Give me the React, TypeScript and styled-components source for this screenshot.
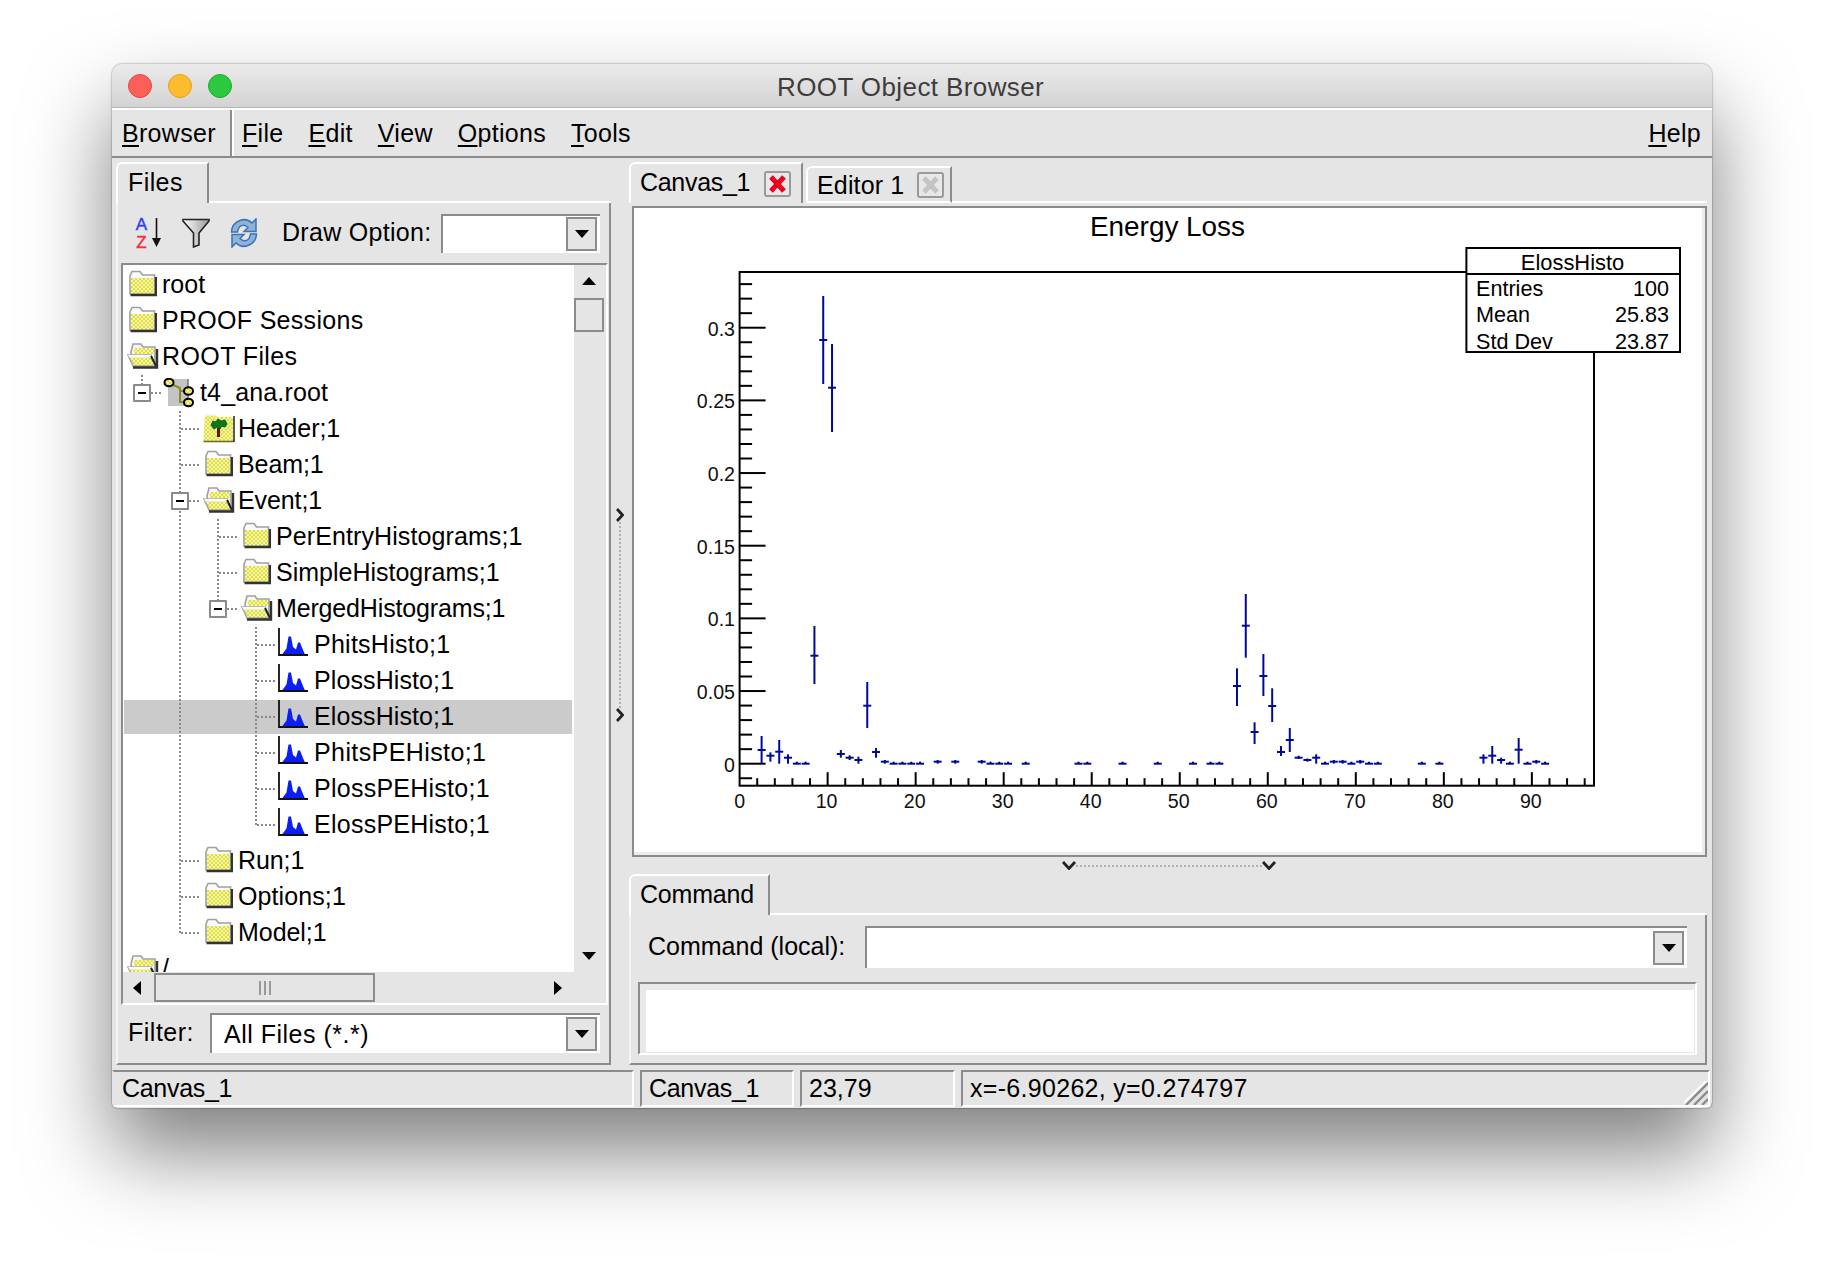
import styled, { createGlobalStyle, css } from "styled-components";

const GlobalStyle = createGlobalStyle`
  html, body {
    margin: 0;
    background: #fff;
    color: #000;
    font-family: "Liberation Sans", Arial, sans-serif;
    font-size: 25px;
  }
`;

const Page = styled.div`
  width: 1824px;
  height: 1268px;
  padding: 64px 112px 0;
  box-sizing: border-box;
  overflow: hidden;
`;

const Window = styled.div`
  width: 1600px;
  height: 1044px;
  display: flex;
  flex-direction: column;
  background: #e5e5e5;
  border-radius: 10px 10px 6px 6px;
  box-shadow: 0 44px 84px rgba(0, 0, 0, 0.5), 0 0 2px rgba(0, 0, 0, 0.55);
  overflow: hidden;
`;

const TitleBar = styled.div`
  height: 44px;
  flex: none;
  display: flex;
  align-items: center;
  gap: 16px;
  padding-left: 16px;
  box-sizing: border-box;
  background: linear-gradient(#ebebeb, #d3d3d3);
  border-bottom: 1px solid #b4b4b4;
`;

const Light = styled.span<{ $color: string; $edge: string }>`
  width: 24px;
  height: 24px;
  box-sizing: border-box;
  border-radius: 50%;
  background: ${(p) => p.$color};
  border: 1px solid ${(p) => p.$edge};
`;

const Title = styled.div`
  margin-left: 529px;
  padding-top: 3px;
  font-size: 26px;
  letter-spacing: 0.4px;
  color: #3d3d3d;
`;

const MenuBar = styled.div`
  height: 50px;
  flex: none;
  display: flex;
  align-items: center;
  box-sizing: border-box;
  border-top: 2px solid #fff;
  border-bottom: 2px solid #8c8c8c;
  padding-right: 11px;
`;

const BrowserMenu = styled.div`
  width: 120px;
  height: 100%;
  flex: none;
  display: flex;
  align-items: center;
  box-sizing: border-box;
  padding-left: 10px;
  border-right: 2px solid #8c8c8c;
  box-shadow: 2px 0 0 #fff;
`;

const MenuList = styled.div`
  display: flex;
  gap: 25px;
  padding-left: 10px;
`;

const MenuItem = styled.span`
  letter-spacing: 0.3px;

  u {
    text-decoration-thickness: 2px;
    text-underline-offset: 3px;
  }
`;

const HelpItem = styled(MenuItem)`
  margin-left: auto;
`;

const Body = styled.div`
  height: 910px;
  flex: none;
  display: flex;
  padding: 4px 5px 0 4px;
  box-sizing: border-box;
`;

const LeftColumn = styled.div`
  width: 495px;
  height: 903px;
  flex: none;
  display: flex;
  flex-direction: column;
`;

const RightColumn = styled.div`
  width: 1078px;
  height: 903px;
  flex: none;
  display: flex;
  flex-direction: column;
`;

const VSplitter = styled.div`
  width: 18px;
  flex: none;
  height: 903px;
  padding-top: 2px;
  box-sizing: border-box;
  display: flex;
  flex-direction: column;
  align-items: center;
  justify-content: center;
`;

const VDots = styled.div`
  height: 186px;
  border-left: 2px dotted #b0b0b0;
`;

const HSplitter = styled.div`
  height: 17px;
  flex: none;
  padding-left: 2px;
  display: flex;
  align-items: center;
  justify-content: center;
`;

const HDots = styled.div`
  width: 186px;
  border-top: 2px dotted #b0b0b0;
`;

const TabStrip = styled.div`
  height: 41px;
  flex: none;
  display: flex;
  align-items: flex-end;
`;

const Tab = styled.div<{ $active?: boolean; $width: number }>`
  width: ${(p) => p.$width}px;
  height: ${(p) => (p.$active ? 41 : 37)}px;
  flex: none;
  display: flex;
  align-items: center;
  box-sizing: border-box;
  padding-left: 9px;
  border-top: 2px solid #fff;
  border-left: 2px solid #fff;
  border-right: 2px solid #8c8c8c;
  border-top-left-radius: 6px;
  ${(p) => !p.$active && "border-bottom: 2px solid #fff; margin-left: 3px;"}
`;

const TabLabel = styled.span<{ $track: number; $active?: boolean; $indent?: number }>`
  letter-spacing: ${(p) => p.$track}px;
  padding: ${(p) => (p.$active ? "0 0 2px" : "2px 0 0")};
  margin-left: ${(p) => p.$indent ?? 0}px;
`;

const TabFill = styled.div`
  flex: 1;
  border-bottom: 2px solid #fff;
`;

const CloseButton = styled.span<{ $gap: number }>`
  width: 27px;
  height: 26px;
  margin-left: ${(p) => p.$gap}px;
  flex: none;
  display: flex;
  align-items: center;
  justify-content: center;
  box-sizing: border-box;
  border: 2px solid #9a9a9a;
  border-radius: 3px;
  background: #e8e8e8;
`;

const FilesPanel = styled.div`
  flex: 1;
  min-height: 0;
  display: flex;
  flex-direction: column;
  border-left: 2px solid #f4f4f4;
  border-right: 2px solid #8c8c8c;
  border-bottom: 2px solid #8c8c8c;
`;

const Toolbar = styled.div`
  height: 60px;
  flex: none;
  display: flex;
  align-items: center;
  box-sizing: border-box;
  padding: 0 9px 0 17px;
`;

const ToolIcon = styled.svg<{ $gap: number }>`
  flex: none;
  margin-right: ${(p) => p.$gap}px;
`;

const FieldLabel = styled.span<{ $left?: number; $track?: number }>`
  margin-left: ${(p) => p.$left ?? 0}px;
  padding-bottom: 2px;
  letter-spacing: ${(p) => p.$track ?? 0}px;
  white-space: nowrap;
`;

const Combo = styled.div<{ $width: number; $height: number }>`
  width: ${(p) => p.$width}px;
  height: ${(p) => p.$height}px;
  margin-left: auto;
  flex: none;
  display: flex;
  align-items: center;
  justify-content: space-between;
  box-sizing: border-box;
  padding: 0 3px 0 12px;
  background: #fff;
  border-top: 2px solid #8c8c8c;
  border-left: 2px solid #8c8c8c;
`;

const ComboText = styled.span`
  letter-spacing: 0.5px;
`;

const ComboButton = styled.span`
  width: 31px;
  height: 34px;
  flex: none;
  display: flex;
  align-items: center;
  justify-content: center;
  box-sizing: border-box;
  background: #e5e5e5;
  border: 2px solid #8c8c8c;
`;

const TreeFrame = styled.div`
  width: 487px;
  height: 742px;
  flex: none;
  margin-left: 3px;
  display: grid;
  grid-template-columns: 451px 32px;
  grid-template-rows: 707px 31px;
  box-sizing: border-box;
  border-top: 2px solid #8c8c8c;
  border-left: 2px solid #8c8c8c;
  border-right: 2px solid #fff;
  border-bottom: 2px solid #fff;
`;

const TreeList = styled.div`
  background: #fff;
  padding-top: 2px;
  overflow: hidden;
`;

const TreeRow = styled.div<{ $selected?: boolean }>`
  height: 36px;
  display: flex;
  align-items: stretch;
  box-sizing: border-box;
  padding: 1px 2px 1px 1px;
  background-clip: content-box;
  background-color: ${(p) => (p.$selected ? "#cbcbcb" : "transparent")};
  white-space: nowrap;
`;

type GuideKind = "none" | "line" | "tee" | "end" | "box" | "boxTop";

const vDots = "repeating-linear-gradient(to bottom, #8a8a8a 0 2px, transparent 2px 4px)";
const hDots = "repeating-linear-gradient(to right, #8a8a8a 0 2px, transparent 2px 4px)";

const guideStyles: Record<GuideKind, ReturnType<typeof css> | string> = {
  none: "",
  line: css`
    background-image: ${vDots};
    background-size: 2px 100%;
    background-position: 17px 0;
  `,
  tee: css`
    background-image: ${vDots}, ${hDots};
    background-size: 2px 100%, 20px 2px;
    background-position: 17px 0, 19px 50%;
  `,
  end: css`
    background-image: ${vDots}, ${hDots};
    background-size: 2px 50%, 20px 2px;
    background-position: 17px 0, 19px 50%;
  `,
  box: css`
    background-image: ${vDots}, ${hDots};
    background-size: 2px 100%, 20px 2px;
    background-position: 17px 0, 19px 50%;
  `,
  boxTop: css`
    background-image: ${vDots}, ${hDots};
    background-size: 2px 50%, 20px 2px;
    background-position: 17px 0, 19px 50%;
  `,
};

const Guide = styled.span<{ $kind: GuideKind }>`
  width: 38px;
  height: 36px;
  margin: -1px 0;
  flex: none;
  display: flex;
  align-items: center;
  padding-left: 9px;
  box-sizing: border-box;
  background-repeat: no-repeat;
  ${(p) => guideStyles[p.$kind]}
`;

const Expander = styled.span`
  width: 18px;
  height: 18px;
  display: flex;
  align-items: center;
  justify-content: center;
  box-sizing: border-box;
  background: #fff;
  border: 2px solid #8a8a8a;
  border-radius: 1px;

  &::before {
    content: "";
    width: 8px;
    height: 2px;
    background: #000;
  }
`;

const IconCell = styled.span`
  width: 38px;
  flex: none;
  display: flex;
  align-items: center;
  justify-content: center;
`;

const RowLabel = styled.span<{ $track?: number }>`
  display: flex;
  align-items: center;
  padding-bottom: 2px;
  letter-spacing: ${(p) => p.$track ?? 0}px;
`;

const VScroll = styled.div`
  display: flex;
  flex-direction: column;
  align-items: center;
  padding: 12px 2px 12px 0;
  box-sizing: border-box;
`;

const VThumb = styled.div`
  width: 30px;
  height: 34px;
  margin-top: 13px;
  box-sizing: border-box;
  border: 2px solid #8c8c8c;
`;

const DownArrow = styled.svg`
  margin-top: auto;
`;

const HScroll = styled.div`
  display: flex;
  align-items: center;
  padding: 0 12px 0 10px;
`;

const HThumb = styled.div`
  width: 221px;
  height: 29px;
  margin-left: 13px;
  display: flex;
  align-items: center;
  justify-content: center;
  gap: 3px;
  box-sizing: border-box;
  border: 2px solid #8c8c8c;
`;

const Grip = styled.span`
  width: 2px;
  height: 14px;
  background: #999;
`;

const RightArrow = styled.svg`
  margin-left: auto;
`;

const FilterRow = styled.div`
  flex: 1;
  display: flex;
  align-items: center;
  padding: 0 9px 2px 10px;
`;

const CanvasPanel = styled.div`
  height: 654px;
  flex: none;
  padding: 3px 0 0 3px;
  box-sizing: border-box;
  display: flex;
`;

const CanvasFrame = styled.div`
  flex: 1;
  min-width: 0;
  background: #fff;
  border: 2px solid #8c8c8c;
  box-sizing: border-box;
  box-shadow: inset -3px -3px 0 #ececec;
`;

const PlotSvg = styled.svg`
  display: block;
  width: 100%;
  height: 100%;
`;

const CommandPanel = styled.div`
  flex: 1;
  min-height: 0;
  display: flex;
  flex-direction: column;
  border-left: 2px solid #f4f4f4;
  border-right: 2px solid #8c8c8c;
  border-bottom: 2px solid #8c8c8c;
`;

const CommandRow = styled.div`
  height: 42px;
  margin-top: 11px;
  flex: none;
  display: flex;
  align-items: center;
  padding: 0 18px 0 17px;
`;

const TextView = styled.div`
  height: 73px;
  margin: 14px 8px 0 7px;
  flex: none;
  display: flex;
  box-sizing: border-box;
  padding: 6px 1px 1px 6px;
  background: #e8e8e8;
  border-top: 2px solid #8c8c8c;
  border-left: 2px solid #8c8c8c;
  border-right: 2px solid #fff;
  border-bottom: 2px solid #fff;
`;

const TextViewInner = styled.div`
  flex: 1;
  background: #fff;
`;

const StatusBar = styled.div`
  height: 37px;
  flex: none;
  display: flex;
  gap: 6px;
  margin-top: 2px;
  padding-right: 2px;
`;

const StatusCell = styled.div<{ $width?: number; $track?: number }>`
  ${(p) => (p.$width ? `width: ${p.$width}px; flex: none;` : "flex: 1;")}
  height: 37px;
  display: flex;
  align-items: center;
  box-sizing: border-box;
  padding-left: 7px;
  letter-spacing: ${(p) => p.$track ?? 0}px;
  border-top: 2px solid #8c8c8c;
  border-left: 2px solid #8c8c8c;
  border-right: 2px solid #fff;
  border-bottom: 2px solid #fff;
`;

const FirstStatusCell = styled(StatusCell)`
  padding-left: 8px;
  border-left-color: #e5e5e5;
`;

const ResizeGrip = styled.svg`
  margin-left: auto;
  align-self: flex-end;
  flex: none;
`;

const HiddenDefs = styled.svg`
  display: block;
  width: 0;
  height: 0;
`;

function SharedDefs() {
  return (
    <HiddenDefs aria-hidden="true">
      <defs>
        <pattern id="dither" width="4" height="4" patternUnits="userSpaceOnUse">
          <rect width="4" height="4" fill="#e0e038" />
          <rect width="2" height="2" fill="#f4f4b4" />
          <rect x="2" y="2" width="2" height="2" fill="#f4f4b4" />
        </pattern>
        <linearGradient id="funnelFill" x1="0" x2="1" y1="0" y2="0">
          <stop offset="0" stopColor="#ffffff" />
          <stop offset="1" stopColor="#9a9a9a" />
        </linearGradient>
      </defs>
    </HiddenDefs>
  );
}

function ClosedFolder() {
  return (
    <svg width="28" height="30" viewBox="0 0 28 30">
      <path d="M1 6 L3 1.5 H11 L13.5 5 H25.5 V24 H1 Z" fill="#fafafa" stroke="#a0a0a0" strokeWidth="1.6" />
      <rect x="2" y="8" width="23" height="15.5" fill="url(#dither)" />
      <path d="M1.5 25 H27 V7" fill="none" stroke="#333" strokeWidth="2.4" />
    </svg>
  );
}

function OpenFolder() {
  return (
    <svg width="32" height="30" viewBox="0 0 32 30">
      <path d="M4 10 L6 2 H14 L16 5 H28 V24 H6 Z" fill="#f6f6f6" stroke="#a0a0a0" strokeWidth="1.6" />
      <rect x="7" y="6" width="20" height="6" fill="url(#dither)" />
      <path d="M1 13 H24 L28 24 H6 Z" fill="url(#dither)" stroke="#a8a8a8" strokeWidth="1.6" />
      <path d="M1 13 H24 L25 15.5 H2.5 Z" fill="#fafafa" />
      <path d="M24 14 L29 24" stroke="#222" strokeWidth="2" />
      <path d="M6 25.5 H30 V7" fill="none" stroke="#333" strokeWidth="2.4" />
    </svg>
  );
}

function HeaderFolder() {
  return (
    <svg width="32" height="32" viewBox="0 0 32 32">
      <path d="M1.5 5 L3 1 H12 L14 4 H30 V28 H0.5 Z" fill="url(#dither)" />
      <path d="M3 1 H12 L13.5 3 H2.5 Z" fill="#f2f2f2" />
      <path d="M0.5 28.5 H31" fill="none" stroke="#6a6a1e" strokeWidth="1.5" />
      <path d="M31 3 V29" stroke="#222" strokeWidth="1.5" />
      <rect x="14" y="15" width="3" height="9" fill="#6e1010" />
      <path d="M8 12 L10 8 L13 9 L15 6 L18 8 L22 7 L24 11 L22 14 L19 13 L17 16 L14 14 L11 16 Z" fill="#067a18" stroke="#034a10" strokeWidth="0.8" />
    </svg>
  );
}

function RootFileIcon() {
  return (
    <svg width="36" height="30" viewBox="0 0 36 30">
      <path d="M5 1 H25 V28 H5 Z" fill="#c4c4c4" />
      <path d="M25 1 V28" stroke="#777" strokeWidth="1.5" />
      <path d="M8 6 L17 10 V24 H23 M17 13 H23" fill="none" stroke="#8a8a24" strokeWidth="2" />
      <ellipse cx="6" cy="4.5" rx="4.5" ry="3.8" fill="url(#dither)" stroke="#000" strokeWidth="2" />
      <ellipse cx="25.5" cy="13" rx="4.5" ry="3.8" fill="url(#dither)" stroke="#000" strokeWidth="2" />
      <ellipse cx="25.5" cy="24.5" rx="4.5" ry="3.8" fill="url(#dither)" stroke="#000" strokeWidth="2" />
    </svg>
  );
}

function HistoIcon() {
  return (
    <svg width="34" height="34" viewBox="0 0 34 34">
      <path d="M4 26.5 L8.5 20.5 L10.5 8.5 L13 8.5 L15 19 L18 21.5 L20 14.5 L22 14.5 L25 22 L27 26.5 Z" fill="#0a1ef5" />
      <path d="M1 0 V27 H30" fill="none" stroke="#111" strokeWidth="1.8" />
    </svg>
  );
}

function TriangleDown({ width = 14, height = 8 }: { width?: number; height?: number }) {
  return (
    <svg width={width} height={height} viewBox="0 0 14 8">
      <path d="M0 0 H14 L7 8 Z" fill="#000" />
    </svg>
  );
}

function CloseX({ color }: { color: string }) {
  return (
    <svg width="17" height="18" viewBox="0 0 17 18">
      <path d="M2 2 L15 16 M15 2 L2 16" stroke={color} strokeWidth="5" />
    </svg>
  );
}

function SortIcon() {
  return (
    <ToolIcon $gap={17} width="30" height="38" viewBox="0 -3 30 38">
      <text x="6.5" y="13" fontSize="17" textAnchor="middle" fill="#2a3cff" stroke="#2a3cff" strokeWidth="0.4">A</text>
      <text x="6.5" y="31" fontSize="17" textAnchor="middle" fill="#ff2a3c" stroke="#ff2a3c" strokeWidth="0.4">Z</text>
      <path d="M21.5 1 V24" stroke="#111" strokeWidth="1.6" />
      <path d="M17 21 H26 L21.5 30 Z" fill="#111" />
    </ToolIcon>
  );
}

function FilterIcon() {
  return (
    <ToolIcon $gap={20} width="28" height="30" viewBox="0 0 28 30">
      <path d="M1 1.5 H27 V3 L17 15 V27 L11.5 29 V15 L1 3 Z" fill="url(#funnelFill)" stroke="#222" strokeWidth="1.6" />
    </ToolIcon>
  );
}

function RefreshIcon() {
  const arrow = "M1.5 14 C2 3 15 -2 22 5 L26 1 V13.5 H14 L18 9.5 C13.5 5 8.5 7.5 7.5 14 Z";
  return (
    <ToolIcon $gap={0} width="28" height="30" viewBox="0 0 28 30">
      <path d={arrow} fill="#8db2dc" stroke="#3e73b0" strokeWidth="1.5" />
      <path d={arrow} transform="rotate(180 14 15)" fill="#8db2dc" stroke="#3e73b0" strokeWidth="1.5" />
    </ToolIcon>
  );
}

function ChevronRight() {
  return (
    <svg width="8" height="14" viewBox="0 0 8 14">
      <path d="M1 1 L6.5 7 L1 13" fill="none" stroke="#222" strokeWidth="2.8" />
    </svg>
  );
}

function ChevronDown() {
  return (
    <svg width="14" height="9" viewBox="0 0 14 9">
      <path d="M1 1 L7 7.5 L13 1" fill="none" stroke="#222" strokeWidth="2.8" />
    </svg>
  );
}

type IconName = "closed" | "open" | "header" | "file" | "histo";

const treeIcons: Record<IconName, () => React.JSX.Element> = {
  closed: ClosedFolder,
  open: OpenFolder,
  header: HeaderFolder,
  file: RootFileIcon,
  histo: HistoIcon,
};

const N: GuideKind = "none";

const treeRows: { label: string; icon: IconName; guides: GuideKind[]; selected?: boolean; track?: number }[] = [
  { label: "root", icon: "closed", guides: [] },
  { label: "PROOF Sessions", icon: "closed", guides: [], track: 0.3 },
  { label: "ROOT Files", icon: "open", guides: [], track: 0.4 },
  { label: "t4_ana.root", icon: "file", guides: ["boxTop"], track: 0.15 },
  { label: "Header;1", icon: "header", guides: [N, "tee"], track: -0.1 },
  { label: "Beam;1", icon: "closed", guides: [N, "tee"], track: -0.1 },
  { label: "Event;1", icon: "open", guides: [N, "box"], track: -0.1 },
  { label: "PerEntryHistograms;1", icon: "closed", guides: [N, "line", "tee"], track: 0.1 },
  { label: "SimpleHistograms;1", icon: "closed", guides: [N, "line", "tee"] },
  { label: "MergedHistograms;1", icon: "open", guides: [N, "line", "boxTop"], track: -0.15 },
  { label: "PhitsHisto;1", icon: "histo", guides: [N, "line", N, "tee"], track: 0.25 },
  { label: "PlossHisto;1", icon: "histo", guides: [N, "line", N, "tee"], track: 0.1 },
  { label: "ElossHisto;1", icon: "histo", guides: [N, "line", N, "tee"], selected: true, track: 0.1 },
  { label: "PhitsPEHisto;1", icon: "histo", guides: [N, "line", N, "tee"], track: 0.4 },
  { label: "PlossPEHisto;1", icon: "histo", guides: [N, "line", N, "tee"], track: 0.25 },
  { label: "ElossPEHisto;1", icon: "histo", guides: [N, "line", N, "end"], track: 0.25 },
  { label: "Run;1", icon: "closed", guides: [N, "tee"], track: -0.1 },
  { label: "Options;1", icon: "closed", guides: [N, "tee"], track: 0.1 },
  { label: "Model;1", icon: "closed", guides: [N, "end"], track: -0.05 },
  { label: "/", icon: "open", guides: [] },
];

function Tree() {
  return (
    <TreeList>
      {treeRows.map((row) => {
        const Icon = treeIcons[row.icon];
        return (
          <TreeRow key={row.label} $selected={row.selected}>
            {row.guides.map((kind, i) => (
              <Guide key={i} $kind={kind}>
                {(kind === "box" || kind === "boxTop") && <Expander />}
              </Guide>
            ))}
            <IconCell>
              <Icon />
            </IconCell>
            <RowLabel $track={row.track}>{row.label}</RowLabel>
          </TreeRow>
        );
      })}
    </TreeList>
  );
}

// plot coordinates are page pixels, the viewBox below starts at the frame's inner corner
const xOf = (v: number) => 739.6 + v * 8.803;
const yOf = (v: number) => 763.7 - v * 1453.3;
const AXIS = { left: 739.6, right: 1594, top: 272, bottom: 785.7 };

const range = (from: number, to: number, step: number) => {
  const out: number[] = [];
  for (let i = 0; from + i * step <= to + 1e-9; i++) out.push(from + i * step);
  return out;
};

// bin, error top, value, error bottom
const errorPoints: [number, number, number, number][] = [
  [2.5, 736, 750, 763.7],
  [3.5, 752.3, 755.7, 761.7],
  [4.5, 740, 751.7, 763.7],
  [5.5, 754.3, 757.7, 763.7],
  [8.5, 626, 655.7, 684],
  [9.5, 296, 340, 384],
  [10.5, 344, 387.7, 432],
  [11.5, 750, 754, 757.7],
  [12.5, 755.3, 757.7, 760],
  [13.5, 756.7, 760, 763.7],
  [14.5, 682, 705.7, 728],
  [15.5, 748, 752, 757.7],
  [16.5, 760, 761.7, 763.7],
  [22.5, 760, 761.7, 763.7],
  [24.5, 760, 761.7, 763.7],
  [27.5, 760, 761.7, 763.7],
  [56.5, 668.3, 686, 706],
  [57.5, 594, 625.7, 657.7],
  [58.5, 722.3, 732, 744],
  [59.5, 654, 676, 696],
  [60.5, 688.3, 706, 722],
  [61.5, 746, 752, 756],
  [62.5, 728, 740, 752],
  [63.5, 755.7, 757.7, 759],
  [64.5, 758.5, 760, 761.7],
  [65.5, 754.3, 757.7, 763.7],
  [67.5, 760, 761.7, 763.7],
  [68.5, 760, 761.7, 763.7],
  [70.5, 760, 761.7, 763.7],
  [84.5, 754.3, 757.7, 763.7],
  [85.5, 746, 755.7, 763.7],
  [86.5, 757.7, 760, 763.7],
  [88.5, 738, 749.7, 763.7],
  [90.5, 760, 761.7, 763.7],
];

const flatBins = [
  6.5, 7.5, 17.5, 18.5, 19.5, 20.5, 28.5, 29.5, 30.5, 32.5, 38.5, 39.5, 43.5, 47.5, 51.5, 53.5, 54.5, 66.5,
  69.5, 71.5, 72.5, 77.5, 79.5, 87.5, 89.5, 91.5,
];

const statRows = [
  ["Entries", "100", 288],
  ["Mean", "25.83", 314],
  ["Std Dev", "23.87", 340.7],
] as const;

function Plot() {
  const { left, right, top, bottom } = AXIS;
  return (
    <PlotSvg viewBox="634 208 1071 647" preserveAspectRatio="none">
      <text x="1167.5" y="236" fontSize="27.9" textAnchor="middle">Energy Loss</text>
      <rect x={left} y={top} width={right - left} height={bottom - top} fill="none" stroke="#000" strokeWidth="2" />

      {range(-0.01, 0.33, 0.01).map((v, i) => {
        const major = (i - 1) % 5 === 0;
        return (
          <line key={i} x1={left} x2={left + (major ? 26 : 12.5)} y1={yOf(v)} y2={yOf(v)} stroke="#000" strokeWidth="2" />
        );
      })}
      {range(2, 96, 2).map((v) => (
        <line key={v} x1={xOf(v)} x2={xOf(v)} y1={bottom} y2={bottom - (v % 10 === 0 ? 13.5 : 7.5)} stroke="#000" strokeWidth="2" />
      ))}

      {["0", "0.05", "0.1", "0.15", "0.2", "0.25", "0.3"].map((label, i) => (
        <text key={label} x="735" y={yOf(i * 0.05) + 8} fontSize="19.6" textAnchor="end" fill="#111">
          {label}
        </text>
      ))}
      {range(0, 90, 10).map((v) => (
        <text key={v} x={xOf(v) - (v === 0 ? 0 : 1)} y="808" fontSize="19.6" textAnchor="middle" fill="#111">
          {v}
        </text>
      ))}

      <g stroke="#000a99" strokeWidth="2">
        {errorPoints.map(([bin, hi, mid, lo]) => (
          <g key={bin}>
            <line x1={xOf(bin)} x2={xOf(bin)} y1={hi} y2={lo} />
            <line x1={xOf(bin) - 4} x2={xOf(bin) + 4} y1={mid} y2={mid} />
          </g>
        ))}
        {flatBins.map((bin) => (
          <g key={bin}>
            <line x1={xOf(bin) - 4} x2={xOf(bin) + 4} y1={yOf(0)} y2={yOf(0)} />
            <line x1={xOf(bin)} x2={xOf(bin)} y1={yOf(0) - 2} y2={yOf(0)} stroke="#000050" />
          </g>
        ))}
      </g>

      <rect x="1466.4" y="248" width="213.6" height="104" fill="#fff" stroke="#000" strokeWidth="2" />
      <line x1="1466.4" x2="1680" y1="274" y2="274" stroke="#000" strokeWidth="2" />
      <text x="1572.5" y="269.5" fontSize="21.9" textAnchor="middle">ElossHisto</text>
      {statRows.map(([name, value, cy]) => (
        <g key={name} fontSize="21.6">
          <text x="1476" y={cy + 8}>{name}</text>
          <text x="1669" y={cy + 8} textAnchor="end">{value}</text>
        </g>
      ))}
    </PlotSvg>
  );
}

export default function App() {
  return (
    <>
      <GlobalStyle />
      <SharedDefs />
      <Page>
        <Window>
          <TitleBar>
            <Light $color="#fc5f57" $edge="#e2463f" />
            <Light $color="#fdbc2e" $edge="#e1a116" />
            <Light $color="#2cc83f" $edge="#1aab29" />
            <Title>ROOT Object Browser</Title>
          </TitleBar>

          <MenuBar>
            <BrowserMenu>
              <MenuItem>
                <u>B</u>rowser
              </MenuItem>
            </BrowserMenu>
            <MenuList>
              <MenuItem>
                <u>F</u>ile
              </MenuItem>
              <MenuItem>
                <u>E</u>dit
              </MenuItem>
              <MenuItem>
                <u>V</u>iew
              </MenuItem>
              <MenuItem>
                <u>O</u>ptions
              </MenuItem>
              <MenuItem>
                <u>T</u>ools
              </MenuItem>
            </MenuList>
            <HelpItem>
              <u>H</u>elp
            </HelpItem>
          </MenuBar>

          <Body>
            <LeftColumn>
              <TabStrip>
                <Tab $active $width={93}>
                  <TabLabel $active $track={0.4} $indent={1}>Files</TabLabel>
                </Tab>
                <TabFill />
              </TabStrip>
              <FilesPanel>
                <Toolbar>
                  <SortIcon />
                  <FilterIcon />
                  <RefreshIcon />
                  <FieldLabel $left={24} $track={0.3}>Draw Option:</FieldLabel>
                  <Combo $width={159} $height={39}>
                    <span />
                    <ComboButton>
                      <TriangleDown />
                    </ComboButton>
                  </Combo>
                </Toolbar>
                <TreeFrame>
                  <Tree />
                  <VScroll>
                    <svg width="14" height="8" viewBox="0 0 14 8">
                      <path d="M0 8 H14 L7 0 Z" fill="#000" />
                    </svg>
                    <VThumb />
                    <DownArrow width="14" height="8" viewBox="0 0 14 8">
                      <path d="M0 0 H14 L7 8 Z" fill="#000" />
                    </DownArrow>
                  </VScroll>
                  <HScroll>
                    <svg width="8" height="14" viewBox="0 0 8 14">
                      <path d="M8 0 V14 L0 7 Z" fill="#000" />
                    </svg>
                    <HThumb>
                      <Grip />
                      <Grip />
                      <Grip />
                    </HThumb>
                    <RightArrow width="8" height="14" viewBox="0 0 8 14">
                      <path d="M0 0 V14 L8 7 Z" fill="#000" />
                    </RightArrow>
                  </HScroll>
                </TreeFrame>
                <FilterRow>
                  <FieldLabel $track={0.5}>Filter:</FieldLabel>
                  <Combo $width={390} $height={40}>
                    <ComboText>All Files (*.*)</ComboText>
                    <ComboButton>
                      <TriangleDown />
                    </ComboButton>
                  </Combo>
                </FilterRow>
              </FilesPanel>
            </LeftColumn>

            <VSplitter>
              <ChevronRight />
              <VDots />
              <ChevronRight />
            </VSplitter>

            <RightColumn>
              <TabStrip>
                <Tab $active $width={174}>
                  <TabLabel $active $track={-0.3}>Canvas_1</TabLabel>
                  <CloseButton $gap={14}>
                    <CloseX color="#e8001c" />
                  </CloseButton>
                </Tab>
                <Tab $width={146}>
                  <TabLabel $track={0.15}>Editor 1</TabLabel>
                  <CloseButton $gap={13}>
                    <CloseX color="#c4c4c4" />
                  </CloseButton>
                </Tab>
                <TabFill />
              </TabStrip>
              <CanvasPanel>
                <CanvasFrame>
                  <Plot />
                </CanvasFrame>
              </CanvasPanel>
              <HSplitter>
                <ChevronDown />
                <HDots />
                <ChevronDown />
              </HSplitter>
              <TabStrip>
                <Tab $active $width={141}>
                  <TabLabel $active $track={-0.2}>Command</TabLabel>
                </Tab>
                <TabFill />
              </TabStrip>
              <CommandPanel>
                <CommandRow>
                  <FieldLabel>Command (local):</FieldLabel>
                  <Combo $width={822} $height={42}>
                    <span />
                    <ComboButton>
                      <TriangleDown />
                    </ComboButton>
                  </Combo>
                </CommandRow>
                <TextView>
                  <TextViewInner />
                </TextView>
              </CommandPanel>
            </RightColumn>
          </Body>

          <StatusBar>
            <FirstStatusCell $width={522} $track={-0.3}>Canvas_1</FirstStatusCell>
            <StatusCell $width={154} $track={-0.3}>Canvas_1</StatusCell>
            <StatusCell $width={155}>23,79</StatusCell>
            <StatusCell $track={0.3}>
              x=-6.90262, y=0.274797
              <ResizeGrip width="24" height="24" viewBox="0 0 24 24">
                <path d="M2 24 L24 2 M10 24 L24 10 M18 24 L24 18" stroke="#8c8c8c" strokeWidth="2.4" />
                <path d="M0 22 L22 0" stroke="#fff" strokeWidth="2" />
              </ResizeGrip>
            </StatusCell>
          </StatusBar>
        </Window>
      </Page>
    </>
  );
}
